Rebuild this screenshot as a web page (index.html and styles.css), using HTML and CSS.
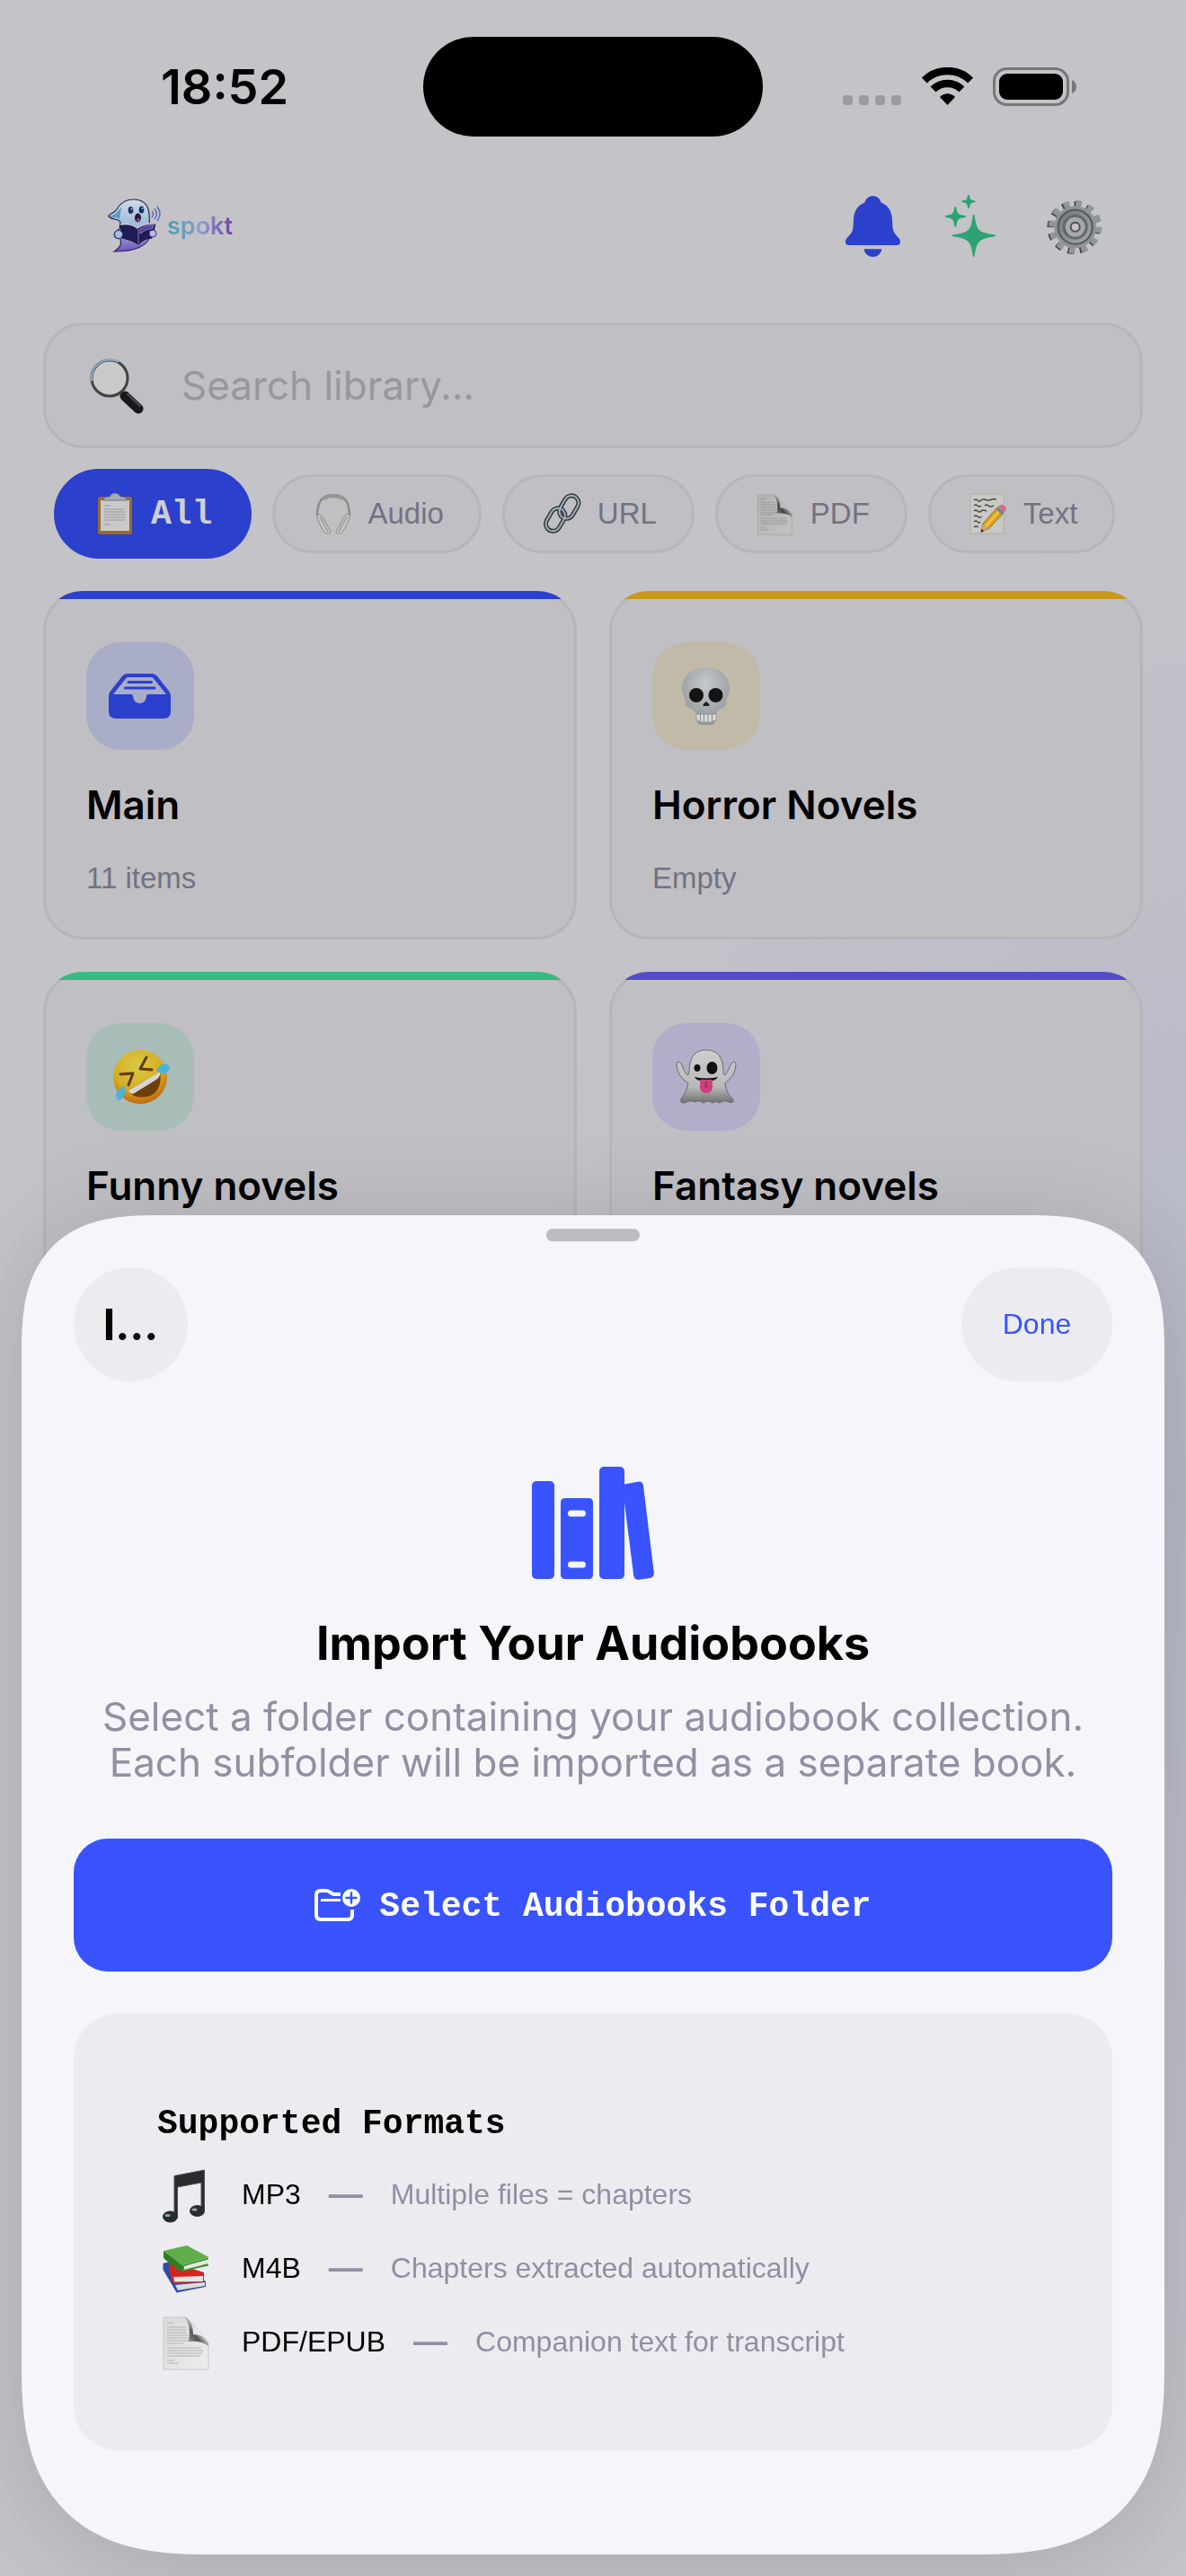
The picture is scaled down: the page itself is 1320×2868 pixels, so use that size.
FILE: index.html
```html
<!DOCTYPE html>
<html lang="en">
<head>
    <meta charset="UTF-8">
    <meta name="viewport" content="width=device-width, initial-scale=1.0">
    <title>spokt - Import Audiobooks</title>
    <link rel="stylesheet" href="styles.css">
</head>
<body>
    <!-- Shared shapes -->
    <svg class="defs" aria-hidden="true">
        <defs>
            <linearGradient id="paper" x1="0" y1="0" x2="1" y2="1">
                <stop offset="0" stop-color="#dadada"/>
                <stop offset="1" stop-color="#ececec"/>
            </linearGradient>
            <linearGradient id="fold" x1="0" y1="1" x2="1" y2="0">
                <stop offset="0" stop-color="#bbb"/>
                <stop offset=".4" stop-color="#555"/>
                <stop offset=".6" stop-color="#ddd"/>
                <stop offset="1" stop-color="#f4f4f4"/>
            </linearGradient>
            <symbol id="doc" viewBox="0 0 63 63">
                <path d="M7 4H32L57 33V62H7Z" fill="url(#paper)" stroke="#c9c9c9"/>
                <path d="M11 10h8M11 15h21M11 18h22M11 21h22M11 24h23M11 27h24M11 30h26M11 33h18M11 38h38M11 41h40M11 44h39M11 47h37M11 52h8M11 55h12" stroke="#c2c2c2" stroke-width="1.4"/>
                <path d="M30 4Q37 5 57 32V36Q50 30 35 31Q38 10 30 4Z" fill="url(#fold)"/>
                <path d="M34 5L56 30Q50 23 40 23Q40 10 34 5Z" fill="#e6e6e6"/>
            </symbol>
        </defs>
    </svg>

    <div class="library">
        <div class="status-bar">
            <span class="time">18:52</span>
            <div class="island"></div>
            <div class="status-icons">
                <svg width="66" height="42" viewBox="0 0 66 42"><g fill="#9c9ca0"><rect y="31" width="11" height="11" rx="4"/><rect x="18" y="31" width="11" height="11" rx="4"/><rect x="36" y="31" width="11" height="11" rx="4"/><rect x="54" y="31" width="11" height="11" rx="4"/></g></svg>
                <svg width="57" height="42" viewBox="0 0 57 42">
                    <g fill="none" stroke="#000">
                        <path d="M2.8 14.6A36.5 36.5 0 0 1 54.2 14.6" stroke-width="8.5"/>
                        <path d="M12.6 24.6A22.5 22.5 0 0 1 44.4 24.6" stroke-width="8.5"/>
                    </g>
                    <path d="M28.5 42L20 33Q28.500 25.500 37 33Z"/>
                </svg>
                <svg width="94" height="43" viewBox="0 0 94 43">
                    <rect x="1.5" y="1.500" width="82" height="40" rx="14" fill="none" stroke="#77777a" stroke-width="3"/>
                    <rect x="7" y="7" width="71" height="29" rx="9"/>
                    <path d="M88 14Q93 16 93 21.500T88 29Z" fill="#77777a"/>
                </svg>
            </div>
        </div>

        <header class="top-bar">
            <div class="logo">
                <svg width="64" height="64" viewBox="0 0 64 64" aria-hidden="true">
                    <defs>
                        <linearGradient id="ghost" x1="0" y1="0" x2="0" y2="1">
                            <stop offset="0" stop-color="#cfdce2"/>
                            <stop offset=".6" stop-color="#93b4d4"/>
                            <stop offset="1" stop-color="#7a4fc0"/>
                        </linearGradient>
                    </defs>
                    <path d="M30 2C41 2 47 8 48 18L49 42C47 54 32 60 9 60C17 55 17 51 16 46C6 45 8 38 15 35L16 27C12 22 8 26 3 21C2 18 9 18 12 13C16 6 21 2 30 2Z" fill="url(#ghost)" stroke="#27245e" stroke-width="1.2"/>
                    <path d="M4 20C11 20 13 15 17 11L15 24C11 20 8 24 4 20Z" fill="#5b9bc4"/>
                    <path d="M16 30Q28 28 35 34Q44 28 55 29L51 45Q43 45 36 52Q29 47 18 45Z" fill="#211c52" stroke="#15123d"/>
                    <path d="M36 35V51M38 35Q45 30 53 30L52 34Q44 35 38 40Z" fill="#5a3f9c" stroke="#8b76c4"/>
                    <path d="M16 30Q28 28 35 34Q44 28 55 29" fill="none" stroke="#c8cfe4" stroke-width="1.500"/>
                    <circle cx="14" cy="41" r="4.500" fill="#a9bede" stroke="#34387c"/>
                    <circle cx="52" cy="40" r="4" fill="#b9b8e0" stroke="#34387c"/>
                    <ellipse cx="27.500" cy="14" rx="2.800" ry="4" fill="#1c2a66"/>
                    <ellipse cx="39.500" cy="13.500" rx="2.800" ry="4" fill="#1c2a66"/>
                    <circle cx="28.500" cy="12.500" r="1" fill="#9fd0ee"/>
                    <circle cx="40.500" cy="12" r="1" fill="#9fd0ee"/>
                    <ellipse cx="35.500" cy="22.500" rx="3.500" ry="5" fill="#2b1440"/>
                    <ellipse cx="36" cy="25" rx="2" ry="2" fill="#9c3e6a"/>
                    <path d="M51 15Q54 18 51 22M54 12Q58.500 18 54 24M57 10Q63 18 57 26" fill="none" stroke="#5a6cc0" stroke-width="1.500"/>
                </svg>
                <span class="logo-text">spokt</span>
            </div>
            <div class="actions">
                <button class="icon-button" aria-label="Notifications">
                    <svg viewBox="0 0 72 72" fill="#2b40cc"><path d="M35.500 2.300C40 2.300 43.500 5 44.500 9.500C52 12 56.500 19 57 28C57.500 36 57 40 60 44C62.500 47.500 66 49.500 66 53.500C66 56 64.500 57 62 57H9C6.500 57 5 56 5 53.500C5 49.500 8.500 47.500 11 44C14 40 13.500 36 14 28C14.500 19 19 12 26.500 9.500C27.500 5 31 2.300 35.500 2.300Z"/><path d="M25.700 61.300H45.300C45 66 41 70 35.500 70S26 66 25.700 61.300Z"/></svg>
                </button>
                <button class="icon-button" aria-label="Create">
                    <svg viewBox="0 0 72 72" fill="#2ea272" stroke="#2ea272" stroke-width="2" stroke-linejoin="round">
                        <path d="M35.700 24C37.500 40 40 44.500 59 46.300C40 48.500 37.500 53 35.700 69C34 53 31.500 48.500 13 46.300C31.500 44.500 34 40 35.700 24Z"/>
                        <path d="M15.300 15C16.300 22.500 17.500 24 26 25C17.500 26.200 16.300 28 15.300 35.500C14.300 28 13 26.200 5 25C13 24 14.300 22.500 15.300 15Z"/>
                        <path d="M30 2C30.700 7 31.500 7.800 36.500 8.300C31.500 9 30.700 10 30 15C29.300 10 28.500 9 23.500 8.300C28.500 7.800 29.300 7 30 2Z"/>
                    </svg>
                </button>
                <button class="icon-button" aria-label="Settings">
                    <svg viewBox="0 0 72 72">
                        <defs>
                            <linearGradient id="steel" x1="0" y1="0" x2="1" y2="1">
                                <stop offset="0" stop-color="#6f767b"/>
                                <stop offset="1" stop-color="#a5a9ad"/>
                            </linearGradient>
                        </defs>
                        <circle cx="35" cy="37.500" r="26" fill="none" stroke="#463f3a" stroke-width="7" stroke-dasharray="6.600 7"/>
                        <circle cx="36.700" cy="36.700" r="26" fill="none" stroke="#90979c" stroke-width="7.500" stroke-dasharray="6.600 7"/>
                        <circle cx="36.700" cy="36.700" r="23.500" fill="#8d9499"/>
                        <circle cx="36.700" cy="36.700" r="19" fill="url(#steel)" stroke="#54585b" stroke-width="2"/>
                        <circle cx="36.700" cy="36.700" r="14" fill="#62676a"/>
                        <circle cx="36.700" cy="36.700" r="11" fill="#a4a9ad"/>
                        <circle cx="36.700" cy="36.700" r="5" fill="#c4c3c8" stroke="#55504c" stroke-width="2"/>
                    </svg>
                </button>
            </div>
        </header>

        <label class="search">
            <svg width="63" height="63" viewBox="0 0 63 63" aria-hidden="true">
                <path d="M40 43L55 57" stroke="#17191b" stroke-width="11" stroke-linecap="round"/>
                <path d="M43 41L57 54" stroke="#4a4e52" stroke-width="2" stroke-linecap="round"/>
                <circle cx="23" cy="23" r="20" fill="#c9c9c9" stroke="#3f4346" stroke-width="3"/>
                <path d="M3 26A20.500 20.500 0 0 1 33 5" fill="none" stroke="#8fb0d4" stroke-width="2"/>
            </svg>
            <input class="search-input" type="text" placeholder="Search library..." aria-label="Search library">
        </label>

        <nav class="filters">
            <button class="chip active">
                <svg viewBox="0 0 48 48" aria-hidden="true">
                    <rect x="5" y="5" width="38" height="42" rx="3" fill="#9a6a2c"/>
                    <path d="M8 9H40V43H8Z" fill="#c9c9c9"/>
                    <path d="M12 15h7M12 19h22M12 22h24M12 25h24M12 28h24M12 31h23M12 36h7" stroke="#a9a9a9" stroke-width="1.300"/>
                    <path d="M11 9Q11 5 18 5Q20 1 24 1T30 5Q37 5 37 9Z" fill="#a6adb0" stroke="#6d7376"/>
                </svg>
                All
            </button>
            <button class="chip">
                <svg viewBox="0 0 48 48" aria-hidden="true">
                    <path d="M8 26C8 10 15 3 26 3S44 10 44 26" fill="none" stroke="#8c8c8a" stroke-width="2.500"/>
                    <path d="M15 7Q26 1 37 7" fill="none" stroke="#979896" stroke-width="4"/>
                    <path d="M8 25Q12 23 15 29L23 44Q23 47 18 46Q13 43 8 28Z" fill="#c5c6c3" stroke="#8b8c8a"/>
                    <path d="M44 25Q40 23 37 29L29 44Q29 47 34 46Q39 43 44 28Z" fill="#c5c6c3" stroke="#8b8c8a"/>
                    <path d="M11 27L20 44M41 27L32 44" stroke="#999a98" stroke-width="1.500"/>
                </svg>
                Audio
            </button>
            <button class="chip">
                <svg viewBox="0 0 48 48" aria-hidden="true" fill="none">
                    <g stroke="#35383b" stroke-width="5">
                        <rect x="9" y="17" width="16" height="27" rx="8" transform="rotate(30 17 31)"/>
                        <rect x="24" y="3" width="16" height="27" rx="8" transform="rotate(30 32 17)"/>
                    </g>
                    <g stroke="#9fb0ba" stroke-width="2">
                        <rect x="9" y="17" width="16" height="27" rx="8" transform="rotate(30 17 31)"/>
                        <rect x="24" y="3" width="16" height="27" rx="8" transform="rotate(30 32 17)"/>
                    </g>
                </svg>
                URL
            </button>
            <button class="chip">
                <svg class="dimmed" aria-hidden="true"><use href="#doc"/></svg>
                PDF
            </button>
            <button class="chip">
                <svg viewBox="0 0 48 48" aria-hidden="true">
                    <rect x="5" y="2" width="37" height="44" fill="#c9cac6" stroke="#aeb0ab"/>
                    <path d="M9 9q2-2 4 0t4 0t4-1t4 1t4-1t5 0M9 15q2-2 4 0t4 0M21 15q2-2 4 0t6 0M9 21q2-2 4 0t4 0t6 0M9 27q2-2 4 0t5 0M9 33q2-2 4 0t3 0M9 39q2-2 5 0" fill="none" stroke="#4b4c4b" stroke-width="1.500"/>
                    <path d="M35 17L42 23L25 41L17 44L19 35Z" fill="#d9a520" stroke="#8e661c"/>
                    <path d="M38 20L22 38" stroke="#f0c94a" stroke-width="2"/>
                    <path d="M19 35L25 41L17 44Z" fill="#cfa878"/>
                    <path d="M17.500 41L20 43L16.500 45Z" fill="#222"/>
                    <path d="M33.500 19L36 16L43 22L40 25Z" fill="#77849a"/>
                    <path d="M36 16Q39 12 43 15T43 22Z" fill="#d2707c"/>
                </svg>
                Text
            </button>
        </nav>

        <main class="folders">
            <article class="folder blue">
                <div class="folder-icon">
                    <svg viewBox="0 0 72 72" aria-hidden="true">
                        <path fill="#2b40cc" fill-rule="evenodd" d="M22 11H49Q53 11 55.500 14.500L68.500 31Q70 33 70 36V53Q70 61 62 61H9Q1 61 1 53V36Q1 33 2.500 31L15.500 14.500Q18 11 22 11ZM20 16.500L6 34H26Q28 34 28 36Q29 44 35.500 44Q42 44 43 36Q43 34 45 34H65L51 16.500Q50 15 48.500 15H22.500Q21 15 20 16.500Z"/>
                        <path d="M23 20.500H48.500M19.500 27H52" stroke="#2b40cc" stroke-width="3" stroke-linecap="round"/>
                    </svg>
                </div>
                <h2 class="folder-name">Main</h2>
                <p class="folder-count">11 items</p>
            </article>
            <article class="folder amber">
                <div class="folder-icon">
                    <svg viewBox="0 0 72 72" aria-hidden="true">
                        <defs>
                            <radialGradient id="bone" cx=".5" cy=".3" r=".7">
                                <stop offset="0" stop-color="#c3c9cc"/>
                                <stop offset="1" stop-color="#8f9598"/>
                            </radialGradient>
                        </defs>
                        <path d="M35.500 4C51 4 62 14 62 28C62 34 58 38 58 44C58 50 50 49 48 54C47 60 48 68 40 68H31C24 68 25 60 24 54C21 49 13 50 13 44C13 38 9 34 9 28C9 14 20 4 35.500 4Z" fill="url(#bone)"/>
                        <ellipse cx="25" cy="35" rx="8" ry="8" fill="#141414"/>
                        <ellipse cx="46.500" cy="35" rx="8" ry="8" fill="#141414"/>
                        <path d="M36 42Q40 45 39.500 47H32.500Q32 45 36 42Z" fill="#1d1d1d"/>
                        <path d="M25 56H47L46 63Q36 66 26 63Z" fill="#d8d8d6"/>
                        <path d="M29.500 56V64M33.500 56V64M38 56V64M42.500 56V64M25 56H47" stroke="#8b8b8b"/>
                    </svg>
                </div>
                <h2 class="folder-name">Horror Novels</h2>
                <p class="folder-count">Empty</p>
            </article>
            <article class="folder green">
                <div class="folder-icon">
                    <svg viewBox="0 0 72 72" aria-hidden="true">
                        <defs>
                            <radialGradient id="face" cx=".45" cy=".3" r=".7">
                                <stop offset="0" stop-color="#d9cb45"/>
                                <stop offset=".65" stop-color="#d6ac22"/>
                                <stop offset="1" stop-color="#c2690b"/>
                            </radialGradient>
                        </defs>
                        <circle cx="36" cy="36" r="30" fill="url(#face)"/>
                        <path d="M23 51L58 30C61 45 54 57 43 58C33 60 26 57 23 51Z" fill="#6f3f0b"/>
                        <path d="M23 51L58 30Q59 36 54 39L28 55Q24 54 23 51Z" fill="#d6d5d2"/>
                        <path d="M14 33L28 32L23 45M43 14L36 27L49 28" fill="none" stroke="#5e3b0d" stroke-width="3" stroke-linecap="round" stroke-linejoin="round"/>
                        <path d="M54 28Q60 19 66 22T66 31Q60 35 54 28Z" fill="#4db2d8"/>
                        <path d="M19 46Q21 55 16 60T9 57Q9 50 19 46Z" fill="#4db2d8"/>
                    </svg>
                </div>
                <h2 class="folder-name">Funny novels</h2>
            </article>
            <article class="folder purple">
                <div class="folder-icon">
                    <svg viewBox="0 0 72 72" aria-hidden="true">
                        <defs>
                            <linearGradient id="sheet" x1="0" y1="0" x2="0" y2="1">
                                <stop offset="0" stop-color="#cfcfcf"/>
                                <stop offset=".7" stop-color="#b9b9b9"/>
                                <stop offset="1" stop-color="#6f6f6f"/>
                            </linearGradient>
                        </defs>
                        <path d="M36 6C49 6 55 15 55 30Q55 34 57 34Q61 29 64 21Q68 17 69 22Q69 34 57 43Q58 54 66 61Q67 66 61 64Q56 61 51 65Q47 62 43 65Q38 61 33 65Q28 61 24 64Q18 61 12 65Q6 65 8 60Q14 54 16 43Q4 36 3 22Q4 17 8 21Q11 29 15 34Q17 34 17 30C17 15 23 6 36 6Z" fill="url(#sheet)" stroke="#6b6b6b"/>
                        <ellipse cx="26" cy="26" rx="3.500" ry="4" fill="#111"/>
                        <ellipse cx="42.500" cy="26" rx="6" ry="7" fill="#111"/>
                        <path d="M23 36Q36 39 49 36Q47 41 36 41T23 36Z" fill="#111"/>
                        <path d="M29 39H43V48Q42 54 36 54T29 48Z" fill="#c8437b"/>
                        <path d="M36 41V48" stroke="#8e2b57" stroke-width="1.500"/>
                    </svg>
                </div>
                <h2 class="folder-name">Fantasy novels</h2>
            </article>
        </main>
    </div>

    <!-- Import sheet -->
    <section class="sheet" aria-labelledby="sheetTitle">
        <div class="grabber"></div>
        <div class="sheet-bar">
            <span class="sheet-name">I...</span>
            <button class="done">Done</button>
        </div>

        <svg class="books" width="136" height="126" viewBox="0 0 136 126" aria-hidden="true">
            <g fill="#3853ff">
                <rect y="16" width="25" height="109" rx="5"/>
                <path fill-rule="evenodd" d="M37 35H63Q68 35 68 40V120Q68 125 63 125H37Q32 125 32 120V40Q32 35 37 35ZM43.500 48.500A3.500 3.500 0 0 0 43.500 55.500H56.500A3.500 3.500 0 0 0 56.500 48.500ZM43.500 105.500A3.500 3.500 0 0 0 43.500 112.500H56.500A3.500 3.500 0 0 0 56.500 105.500Z"/>
                <rect x="75" width="28" height="125" rx="5"/>
                <path d="M103 19.500L118 16.700Q123 16 124 21L135.800 118Q136 123 131 124L119 125.700Q114 126 113.200 121L103 40Z"/>
            </g>
        </svg>
        <h1 class="sheet-title" id="sheetTitle">Import Your Audiobooks</h1>
        <p class="sheet-text">Select a folder containing your audiobook collection.<br>Each subfolder will be imported as a separate book.</p>

        <button class="select-button">
            <svg width="52" height="38" viewBox="0 0 52 38" fill="none" aria-hidden="true">
                <path d="M29 6H21L17 3.500Q15 2 13 2H7Q2 2 2 7V29Q2 34 7 34H37Q42 34 42 29V23" stroke="#fff" stroke-width="4"/>
                <path d="M7 12.500H29" stroke="#fff" stroke-width="3"/>
                <circle cx="41" cy="10" r="10" fill="#fff"/>
                <path d="M41 4.500V15.500M35.500 10H46.500" stroke="#3853ff" stroke-width="2.500" stroke-linecap="round"/>
            </svg>
            Select Audiobooks Folder
        </button>

        <div class="formats">
            <h2 class="formats-title">Supported Formats</h2>
            <ul class="format-list">
                <li class="format">
                    <svg viewBox="0 0 63 63" aria-hidden="true">
                        <path fill-rule="evenodd" d="M19 10.500L52.500 4V49H49V18L22.500 23V56H19Z" fill="#2c2a2c" stroke="#49545e"/>
                        <ellipse cx="14.500" cy="56" rx="8.500" ry="6.500" fill="#272d33"/>
                        <ellipse cx="44.500" cy="49.500" rx="8.500" ry="6.500" fill="#272d33"/>
                        <ellipse cx="11.500" cy="54.500" rx="3" ry="1.500" fill="#9aa4ac"/>
                        <ellipse cx="41.500" cy="48" rx="3" ry="1.500" fill="#9aa4ac"/>
                    </svg>
                    <span>MP3</span>
                    <span class="dash">—</span>
                    <span class="format-note">Multiple files = chapters</span>
                </li>
                <li class="format">
                    <svg viewBox="0 0 63 63" aria-hidden="true">
                        <path d="M6.500 26L14 24L54 46V52L21.500 58.500L6.500 33Z" fill="#2c4cad"/>
                        <path d="M20 50L53 47V51L23 56Z" fill="#dcdcdc"/>
                        <path d="M13 24L52 36V47L17 48L13 32Z" fill="#d5241f"/>
                        <path d="M18 41L51 40V46L19 46.500Z" fill="#e6e4e2"/>
                        <path d="M7 12L33 6L57.500 19L28 28Z" fill="#5fae4c"/>
                        <path d="M7 12L28 28V35Q24 35 7 20Z" fill="#2f7d22"/>
                        <path d="M28 28L57 19.500V21L55 22V26L57 27V28.500L28 35Z" fill="#3d8f2e"/>
                        <path d="M30 29L55 22V26.500L30 33Z" fill="#e8e8e6"/>
                    </svg>
                    <span>M4B</span>
                    <span class="dash">—</span>
                    <span class="format-note">Chapters extracted automatically</span>
                </li>
                <li class="format">
                    <svg aria-hidden="true"><use href="#doc"/></svg>
                    <span>PDF/EPUB</span>
                    <span class="dash">—</span>
                    <span class="format-note">Companion text for transcript</span>
                </li>
            </ul>
        </div>
    </section>
</body>
</html>
```
FILE: styles.css
```css
* {
    box-sizing: border-box;
}

body {
    margin: 0;
    font-family: "Liberation Sans", Arial, sans-serif;
    font-size: 33px;
    color: #000;
    background-color: #c4c3c8;
}

button {
    font: inherit;
    border: none;
    padding: 0;
    background: none;
    cursor: pointer;
}

h1, h2, p, ul {
    margin: 0;
    padding: 0;
}

svg {
    display: block;
    flex: none;
}

.defs {
    position: absolute;
    width: 0;
    height: 0;
}

/* Library screen behind the sheet */
.library {
    min-height: 100vh;
    padding-top: 41px;
    background: radial-gradient(ellipse 800px 1100px at 100% 58%, #b7b8c8 0%, #bdbdc9 50%, #c4c3c8 100%);
}

.status-bar {
    display: grid;
    grid-template-columns: 1fr 378px 1fr;
    align-items: center;
}

.time {
    padding-left: 179px;
    font-family: Inter, sans-serif;
    font-size: 54px;
    font-weight: 600;
}

.island {
    height: 111px;
    border-radius: 56px;
    background-color: #000;
}

.status-icons {
    display: flex;
    justify-content: flex-end;
    gap: 22px;
    padding-right: 121px;
}

.top-bar {
    display: flex;
    justify-content: space-between;
    align-items: center;
    padding: 64px 88px 71px 118px;
}

.logo {
    display: flex;
    align-items: center;
    gap: 4px;
}

.logo-text {
    font-family: Inter, sans-serif;
    font-size: 27px;
    font-weight: 600;
    line-height: 36px;
    color: transparent;
    background: linear-gradient(90deg, #4a9cae, #8a9fd0 50%, #7440a4);
    background-clip: text;
    -webkit-background-clip: text;
}

.actions {
    display: flex;
    gap: 40px;
}

.icon-button, .icon-button svg {
    width: 72px;
    height: 72px;
}

/* Search */
.search {
    display: flex;
    align-items: center;
    gap: 40px;
    height: 140px;
    margin: 0 48px;
    padding: 0 48px;
    border: 3px solid #b6b6ba;
    border-radius: 44px;
    background-color: #c0bfc4;
}

.search-input {
    flex: 1;
    min-width: 0;
    padding: 0;
    border: none;
    outline: none;
    background: none;
    font-family: Inter, sans-serif;
    font-size: 44px;
}

.search-input::placeholder {
    color: #98979d;
    opacity: 1;
}

/* Filter chips */
.filters {
    display: flex;
    align-items: center;
    gap: 23px;
    margin: 23px 60px 36px;
}

.chip {
    display: flex;
    align-items: center;
    gap: 16px;
    height: 88px;
    padding: 0 39px;
    border: 3px solid #b6b6ba;
    border-radius: 44px;
    background-color: #c0bfc4;
    color: #737280;
}

.chip svg {
    width: 48px;
    height: 48px;
}

.chip .dimmed {
    filter: brightness(0.82);
}

.chip.active {
    height: 100px;
    padding: 0 41px;
    border-color: #2b40cc;
    border-radius: 50px;
    background-color: #2b40cc;
    color: #cfcfd2;
    font-family: "Liberation Mono", monospace;
    font-size: 38px;
    font-weight: bold;
}

/* Folder cards */
.folders {
    display: grid;
    grid-template-columns: 1fr 1fr;
    grid-auto-rows: 1fr;
    gap: 36px;
    padding: 0 48px;
}

.folder {
    position: relative;
    overflow: hidden;
    padding: 57px 48px 48px;
    border-radius: 44px;
    background-color: #c0bfc4;
    box-shadow: inset 0 0 0 3px #b6b6ba;
}

.folder::before {
    content: "";
    position: absolute;
    top: 0;
    left: 0;
    right: 0;
    height: 9px;
    background-color: var(--accent);
}

.folder-icon {
    display: flex;
    align-items: center;
    justify-content: center;
    width: 120px;
    height: 120px;
    border-radius: 38px;
    background-color: var(--tint);
}

.folder-icon svg {
    width: 72px;
    height: 72px;
}

.blue { --accent: #2b40cc; --tint: #a9adc8; }
.amber { --accent: #c8981c; --tint: #c2baa9; }
.green { --accent: #36ba82; --tint: #a9bdb8; }
.purple { --accent: #534cc8; --tint: #b0aec8; }

.folder-name {
    margin: 31px 0 32px;
    font-family: Inter, sans-serif;
    font-size: 44px;
    font-weight: 600;
    line-height: 60px;
}

.folder-count {
    line-height: 40px;
    color: #737280;
}

/* Import sheet */
.sheet {
    position: fixed;
    left: 24px;
    right: 24px;
    bottom: 24px;
    padding: 15px 58px 116px;
    border-radius: 116px 116px 162px 162px;
    background-color: #f5f5fa;
    box-shadow: 0 10px 110px rgba(0, 0, 0, 0.14);
    text-align: center;
}

/* Smoother corners where the browser has them */
@supports (corner-shape: superellipse(1.4)) {
    .sheet {
        border-radius: 150px 150px 210px 210px;
        corner-shape: superellipse(1.4);
    }
}

.grabber {
    width: 104px;
    height: 14px;
    margin: 0 auto 29px;
    border-radius: 7px;
    background-color: #bbbcc1;
}

.sheet-bar {
    display: flex;
    justify-content: space-between;
}

.sheet-name, .done {
    height: 127px;
    border-radius: 64px;
    background-color: #ececf0;
    line-height: 127px;
}

.sheet-name {
    width: 127px;
    font-family: Inter, sans-serif;
    font-size: 48px;
    font-weight: 700;
}

.done {
    width: 168px;
    font-size: 32px;
    color: #3853ff;
}

.books {
    margin: 95px auto 39px;
}

.sheet-title {
    margin-bottom: 24px;
    font-family: Inter, sans-serif;
    font-size: 52px;
    font-weight: 700;
    line-height: 64px;
}

.sheet-text {
    font-family: Inter, sans-serif;
    font-size: 44px;
    line-height: 51px;
    color: #9090a2;
}

.select-button {
    display: flex;
    align-items: center;
    justify-content: center;
    gap: 20px;
    width: 100%;
    height: 148px;
    margin: 59px 0 47px;
    padding-top: 2px;
    border-radius: 38px;
    background-color: #3853ff;
    color: #fff;
    font-family: "Liberation Mono", monospace;
    font-size: 38px;
    font-weight: bold;
}

.formats {
    padding: 98px 93px 80px;
    border-radius: 50px;
    background-color: #ececf0;
    text-align: left;
}

.formats-title {
    margin-bottom: 12px;
    font-family: "Liberation Mono", monospace;
    font-size: 38px;
    line-height: 50px;
}

.format-list {
    list-style: none;
}

.format {
    display: flex;
    align-items: center;
    gap: 31px;
    height: 82px;
    font-size: 32px;
}

.format svg {
    width: 63px;
    height: 63px;
}

.dash {
    font-size: 38px;
    font-weight: bold;
    color: #9090a2;
}

.format-note {
    color: #9090a2;
}
```
